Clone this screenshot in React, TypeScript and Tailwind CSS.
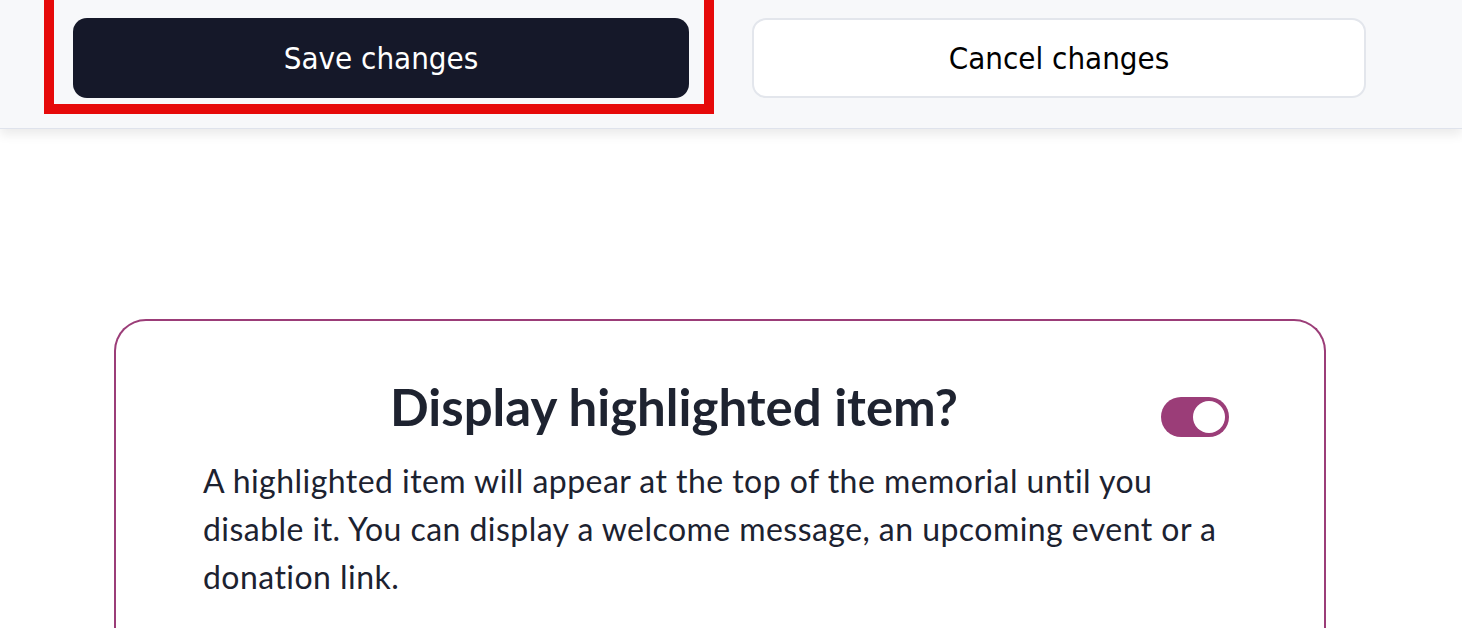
export default function App() {
  return (
    <div className="min-h-screen bg-white font-['Lato',sans-serif] text-[#1c2230]">
      <div className="relative z-10 h-[129px] bg-[#f7f8fa] border-b border-[#dfe3ec] shadow-[0_6px_10px_rgba(0,0,0,0.08)]">
        <div className="flex items-start gap-[38px] pl-[44px]">
          <div className="border-[10px] border-[#e60a0a] border-t-0 pt-[18px] pb-[6px] pl-[19px] pr-[15px]">
            <button className="w-[616px] h-[80px] rounded-[14px] bg-[#151829] text-white text-[31px] font-['DejaVu_Sans',sans-serif] font-stretch-condensed">
              Save changes
            </button>
          </div>
          <button className="mt-[18px] w-[614px] h-[80px] rounded-[14px] bg-white border-2 border-[#e3e6ec] text-black text-[31px] font-['DejaVu_Sans',sans-serif] font-stretch-condensed">
            Cancel changes
          </button>
        </div>
      </div>

      <div className="pt-[190px] pl-[114px] pr-[136px]">
        <div className="rounded-t-[32px] border-2 border-b-0 border-[#9b3d78] px-[87px] pt-[56px] pb-10">
          <div className="flex items-center">
            <h2 className="flex-1 text-center text-[51px] leading-[60px] font-bold text-[#1e2330]">
              Display highlighted item?
            </h2>
            <div className="ml-4 mr-[8px] mt-[20px] w-[68px] h-[40px] rounded-full bg-[#9b3d78] p-1 flex justify-end">
              <div className="w-8 h-8 rounded-full bg-white" />
            </div>
          </div>
          <p className="mt-[20px] text-[32px] leading-[48px] tracking-[0.45px] text-[#1c2230]">
            A highlighted item will appear at the top of the memorial until you disable it. You can display a welcome message, an upcoming event or a donation link.
          </p>
        </div>
      </div>
    </div>
  )
}
